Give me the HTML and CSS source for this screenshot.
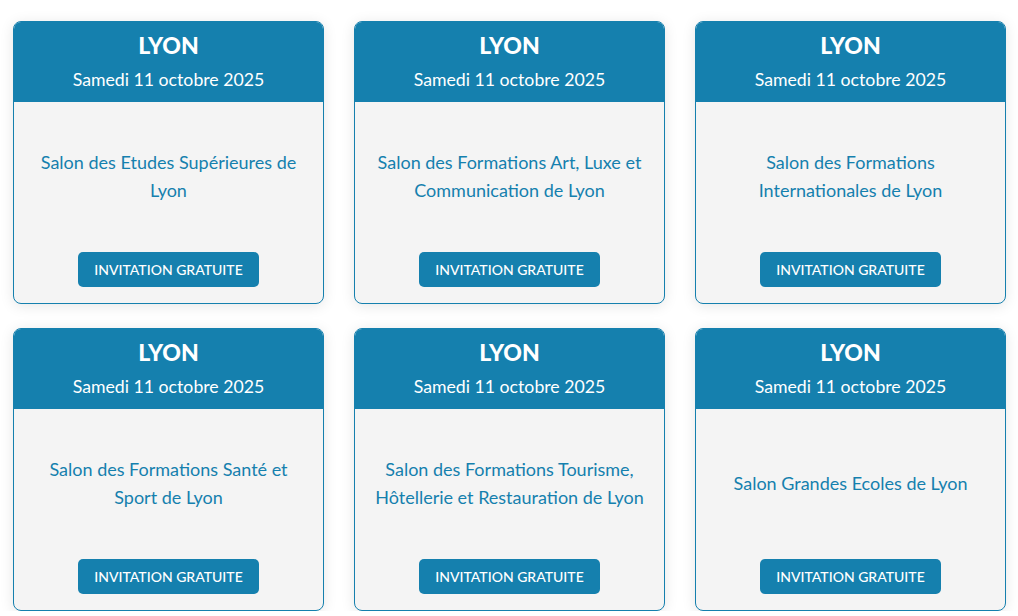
FILE: index.html
```html
<!DOCTYPE html>
<html lang="fr">
<head>
<meta charset="utf-8">
<title>Salons Lyon</title>
<link rel="stylesheet" href="styles.css">
</head>
<body>
<div class="grid">
  <div class="card">
    <div class="card-head"><div class="city">LYON</div><div class="date">Samedi 11 octobre 2025</div></div>
    <div class="card-body"><div class="title">Salon des Etudes Supérieures de Lyon</div><a class="btn" href="#">INVITATION GRATUITE</a></div>
  </div>
  <div class="card">
    <div class="card-head"><div class="city">LYON</div><div class="date">Samedi 11 octobre 2025</div></div>
    <div class="card-body"><div class="title">Salon des Formations Art, Luxe et Communication de Lyon</div><a class="btn" href="#">INVITATION GRATUITE</a></div>
  </div>
  <div class="card">
    <div class="card-head"><div class="city">LYON</div><div class="date">Samedi 11 octobre 2025</div></div>
    <div class="card-body"><div class="title">Salon des Formations Internationales de Lyon</div><a class="btn" href="#">INVITATION GRATUITE</a></div>
  </div>
  <div class="card">
    <div class="card-head"><div class="city">LYON</div><div class="date">Samedi 11 octobre 2025</div></div>
    <div class="card-body"><div class="title">Salon des Formations Santé et Sport de Lyon</div><a class="btn" href="#">INVITATION GRATUITE</a></div>
  </div>
  <div class="card">
    <div class="card-head"><div class="city">LYON</div><div class="date">Samedi 11 octobre 2025</div></div>
    <div class="card-body"><div class="title">Salon des Formations Tourisme, Hôtellerie et Restauration de Lyon</div><a class="btn" href="#">INVITATION GRATUITE</a></div>
  </div>
  <div class="card">
    <div class="card-head"><div class="city">LYON</div><div class="date">Samedi 11 octobre 2025</div></div>
    <div class="card-body"><div class="title">Salon Grandes Ecoles de Lyon</div><a class="btn" href="#">INVITATION GRATUITE</a></div>
  </div>
</div>
</body>
</html>
```
FILE: styles.css
```css
html, body { margin: 0; padding: 0; background: #ffffff; }
body { font-family: Lato, "Liberation Sans", sans-serif; }
.grid {
  display: grid;
  grid-template-columns: repeat(3, 311px);
  column-gap: 30px;
  row-gap: 24px;
  padding: 21px 12px 0 13px;
}
.card {
  border: 1px solid #1580ae;
  border-radius: 8px;
  overflow: hidden;
  background: #f4f4f4;
  box-shadow: 0 2px 14px rgba(0,0,0,0.10);
  display: flex;
  flex-direction: column;
}
.card-head {
  background: #1580ae;
  color: #fff;
  height: 80px;
  text-align: center;
  box-sizing: border-box;
  padding-top: 9px;
}
.city { font-weight: 900; font-size: 23px; line-height: 28px; }
.date { font-size: 17.7px; line-height: 24px; margin-top: 9px; }
.card-body {
  display: flex;
  flex-direction: column;
  align-items: center;
  padding: 19px 16px 16px;
}
.title {
  height: 110px;
  display: flex;
  align-items: center;
  justify-content: center;
  text-align: center;
  color: #1580ae;
  font-size: 18px;
  line-height: 28px;
}
.btn {
  margin-top: 21px;
  background: #1580ae;
  color: #fff;
  text-decoration: none;
  font-size: 14px;
  font-weight: 500;
  height: 35px;
  line-height: 35px;
  padding: 0 16px;
  border-radius: 5px;
}
```
